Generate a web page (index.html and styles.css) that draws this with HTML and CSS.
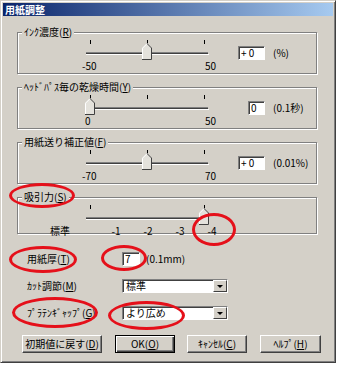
FILE: index.html
```html
<!doctype html>
<html>
<head>
<meta charset="utf-8">
<title>用紙調整</title>
<link rel="stylesheet" href="styles.css">
</head>
<body>
<div class="win">
	<div class="title">用紙調整</div>
	<div class="client">

		<div class="group first">
			<span class="legend">ｲﾝｸ濃度(<u>R</u>)</span>
			<div class="row">
				<div class="slider">
					<svg width="134" height="22">
						<rect x="8" y="1" width="1" height="4"/>
						<rect x="65" y="1" width="1" height="4"/>
						<rect x="122" y="1" width="1" height="4"/>
						<rect x="4" y="13" width="122" height="1" fill="#808080"/>
						<rect x="4" y="14" width="122" height="1" fill="#404040"/>
						<rect x="4" y="15" width="123" height="1" fill="#fff"/>
						<path d="M60 21V9l5-5 5 5v12z" fill="#e4e2dc"/>
						<path d="M60.5 21V9.2l4.5-4.5" stroke="#fff" fill="none"/>
						<path d="M65.3 4.8l4.2 4.2V20.5H60" stroke="#404040" fill="none"/>
					</svg>
					<div class="scale"><span>-50</span><span>50</span></div>
				</div>
				<div class="edit w27">+ 0</div>
				<span class="unit">(%)</span>
			</div>
		</div>

		<div class="group">
			<span class="legend">ﾍｯﾄﾞﾊﾟｽ毎の乾燥時間(<u>Y</u>)</span>
			<div class="row">
				<div class="slider">
					<svg width="134" height="22">
						<rect x="8" y="1" width="1" height="4"/>
						<rect x="65" y="1" width="1" height="4"/>
						<rect x="122" y="1" width="1" height="4"/>
						<rect x="4" y="13" width="122" height="1" fill="#808080"/>
						<rect x="4" y="14" width="122" height="1" fill="#404040"/>
						<rect x="4" y="15" width="123" height="1" fill="#fff"/>
						<path d="M3 21V9l5-5 5 5v12z" fill="#e4e2dc"/>
						<path d="M3.5 21V9.2l4.5-4.5" stroke="#fff" fill="none"/>
						<path d="M8.3 4.8l4.2 4.2V20.5H3" stroke="#404040" fill="none"/>
					</svg>
					<div class="scale zero"><span>0</span><span>50</span></div>
				</div>
				<div class="edit w17">0</div>
				<span class="unit">(0.1秒)</span>
			</div>
		</div>

		<div class="group">
			<span class="legend">用紙送り補正値(<u>F</u>)</span>
			<div class="row">
				<div class="slider">
					<svg width="134" height="22">
						<rect x="8" y="1" width="1" height="4"/>
						<rect x="65" y="1" width="1" height="4"/>
						<rect x="122" y="1" width="1" height="4"/>
						<rect x="4" y="13" width="122" height="1" fill="#808080"/>
						<rect x="4" y="14" width="122" height="1" fill="#404040"/>
						<rect x="4" y="15" width="123" height="1" fill="#fff"/>
						<path d="M60 21V9l5-5 5 5v12z" fill="#e4e2dc"/>
						<path d="M60.5 21V9.2l4.5-4.5" stroke="#fff" fill="none"/>
						<path d="M65.3 4.8l4.2 4.2V20.5H60" stroke="#404040" fill="none"/>
					</svg>
					<div class="scale"><span>-70</span><span>70</span></div>
				</div>
				<div class="edit w27">+ 0</div>
				<span class="unit">(0.01%)</span>
			</div>
		</div>

		<div class="group short">
			<span class="legend">吸引力(<u>S</u>)</span>
			<div class="row">
				<svg width="134" height="22">
					<rect x="8" y="1" width="1" height="4"/>
					<rect x="122" y="1" width="1" height="4"/>
					<rect x="4" y="13" width="122" height="1" fill="#808080"/>
					<rect x="4" y="14" width="122" height="1" fill="#404040"/>
					<rect x="4" y="15" width="123" height="1" fill="#fff"/>
					<path d="M117 21V9l5-5 5 5v12z" fill="#e4e2dc"/>
					<path d="M117.5 21V9.2l4.5-4.5" stroke="#fff" fill="none"/>
					<path d="M122.3 4.8l4.2 4.2V20.5H117" stroke="#404040" fill="none"/>
				</svg>
			</div>
			<div class="levels"><span>標準</span><span>-1</span><span>-2</span><span>-3</span><span>-4</span></div>
		</div>

		<div class="form">
			<span>用紙厚(<u>T</u>)</span>
			<div class="line"><div class="edit w18">7</div><span class="unit2">(0.1mm)</span></div>
			<span>ｶｯﾄ調節(<u>M</u>)</span>
			<div class="combo"><span>標準</span><i></i></div>
			<span>ﾌﾟﾗﾃﾝｷﾞｬｯﾌﾟ(<u>G</u>)</span>
			<div class="combo"><span>より広め</span><i></i></div>
		</div>

		<div class="buttons">
			<button class="btn w80">初期値に戻す(<u>D</u>)</button>
			<button class="btn def w60">OK(<u>O</u>)</button>
			<button class="btn w60">ｷｬﾝｾﾙ(<u>C</u>)</button>
			<button class="btn w61">ﾍﾙﾌﾟ(<u>H</u>)</button>
		</div>
	</div>

	<div class="mark m1"></div>
	<div class="mark m2"></div>
	<div class="mark m3"></div>
	<div class="mark m4"></div>
	<div class="mark m5"></div>
	<div class="mark m6"></div>
</div>
</body>
</html>
```

FILE: styles.css
```css
*{margin:0; padding:0;}
body{background:#fff; font-family:"Noto Sans CJK JP", sans-serif; font-size:10px; line-height:12px; color:#000;}
u{text-decoration:underline; text-underline-offset:1px;}

.win{width:336px; height:363px; box-sizing:border-box; position:relative; background:#d4d0c8; border:1px solid; border-color:#d4d0c8 #404040 #404040 #d4d0c8; box-shadow:inset 1px 1px 0 #fff, inset -1px -1px 0 #808080;}
.title{height:13px; margin:2px 2px 0; padding-left:2px; background:linear-gradient(to right,#0a246a,#a6caf0); color:#fff; font-weight:bold; line-height:13px;}
.client{padding-left:16px;}

.group{width:300px; height:42px; box-sizing:border-box; margin-top:13px; border:1px solid #808080; box-shadow:1px 1px 0 #fff, inset 1px 1px 0 #fff;}
.group.first{margin-top:16px;}
.group.short{height:37px;}
.legend{display:block; width:fit-content; margin:-7px 0 0 4px; padding:0 2px; background:#d4d0c8;}

.row{display:flex; align-items:flex-start; margin:1px 0 0 64px;}
.row svg{display:block;}
.slider{width:134px;}
.scale{display:flex; justify-content:space-between; margin-top:-1px;}
.scale.zero{padding-left:3px;}

.edit{height:14px; box-sizing:border-box; margin-top:7px; padding-left:2px; background:#fff; border:1px solid; border-color:#808080 #fff #fff #808080; box-shadow:inset 1px 1px 0 #404040; line-height:12px;}
.w27{width:27px; margin-left:22px;}
.w17{width:17px; margin-left:32px;}
.w18{width:18px; margin-top:0;}
.unit{margin:8px 0 0 8px;}

.levels{display:flex; margin:-1px 0 0 26px;}
.levels span{width:32px; text-align:center;}
.levels span:first-child{margin-right:24px;}

.form{display:grid; grid-template-columns:95px auto; row-gap:13px; align-items:center; justify-items:start; margin:18px 0 0 10px;}
.line{display:flex; align-items:center;}
.unit2{margin-left:6px;}
.combo{width:106px; height:14px; box-sizing:border-box; display:flex; background:#fff; border:1px solid; border-color:#808080 #fff #fff #808080; box-shadow:inset 1px 1px 0 #404040;}
.combo span{flex:1; padding-left:3px; line-height:12px;}
.combo i{width:14px; height:12px; box-sizing:border-box; display:flex; align-items:center; justify-content:center; background:#d4d0c8; border:1px solid; border-color:#fff #404040 #404040 #fff;}
.combo i:after{content:""; border-top:3px solid #000; border-left:3px solid transparent; border-right:3px solid transparent;}

.buttons{display:flex; gap:13px; margin:15px 0 0 5px;}
.btn{height:18px; box-sizing:border-box; background:#d4d0c8; border:1px solid; border-color:#fff #404040 #404040 #fff; box-shadow:inset -1px -1px 0 #808080; font:inherit; line-height:16px; color:#000; text-align:center;}
.btn.def{border-color:#000; box-shadow:inset 1px 1px 0 #fff, inset -1px -1px 0 #404040, inset -2px -2px 0 #808080;}
.w80{width:80px;}
.w60{width:60px;}
.w61{width:61px;}
.buttons .w60 + .w60{margin-left:-1px;}

.mark{position:absolute; box-sizing:border-box; border:3px solid #e5101a; border-radius:50%;}
.m1{left:8px; top:182px; width:66px; height:25px;}
.m2{left:191px; top:212px; width:44px; height:33px;}
.m3{left:8px; top:245px; width:68px; height:27px;}
.m4{left:100px; top:244px; width:46px; height:26px;}
.m5{left:11px; top:296px; width:86px; height:31px;}
.m6{left:107px; top:300px; width:77px; height:29px;}
```
